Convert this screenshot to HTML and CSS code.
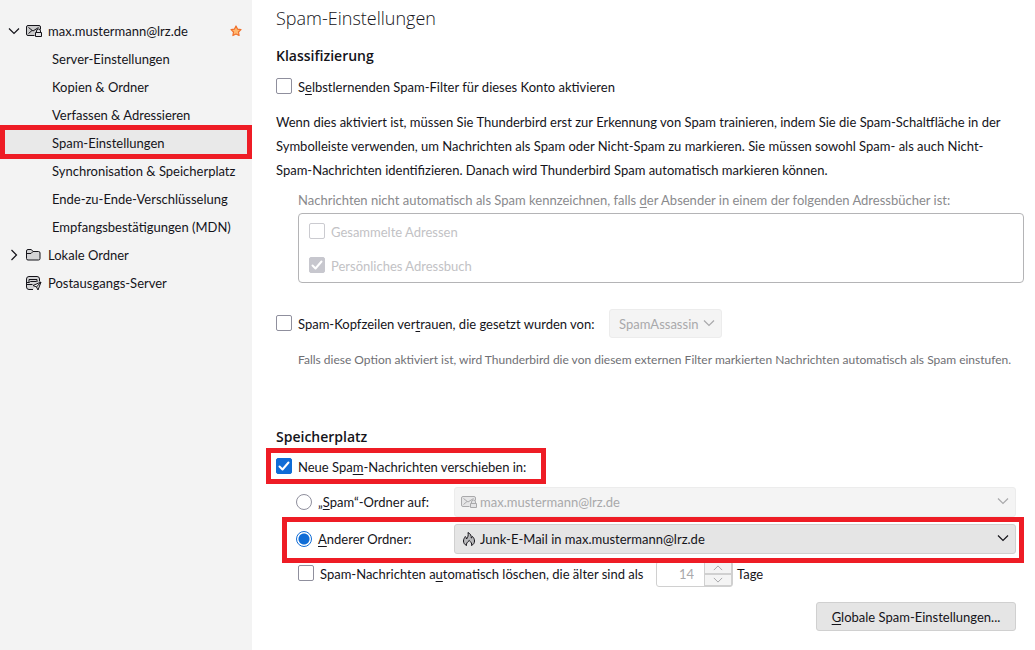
FILE: index.html
```html
<!DOCTYPE html>
<html lang="de">
<head>
<meta charset="utf-8">
<title>Spam-Einstellungen</title>
<link rel="stylesheet" href="styles.css">
</head>
<body>
<svg class="defs" aria-hidden="true">
  <symbol id="mail-lock" viewBox="0 0 16 16">
    <path d="M8.500 12.500h-6.500a1.500 1.500 0 0 1-1.500-1.500v-7a1.500 1.500 0 0 1 1.500-1.500h11a1.500 1.500 0 0 1 1.500 1.500v2.500" fill="currentColor" fill-opacity=".18" stroke="currentColor"/>
    <path d="M2.500 4.500l4.500 3.500 5.500-3.500M2.500 10.500l3.500-3" fill="none" stroke="currentColor"/>
    <path d="M9.500 9.500h6v4h-6zM10.500 9.500v-1.500a2 2 0 0 1 4 0v1.500" fill="#e4e4e6" stroke="currentColor"/>
  </symbol>
  <symbol id="chevron" viewBox="0 0 12 12">
    <path d="M1 3.500l5 5 5-5" fill="none" stroke="currentColor" stroke-width="1.200"/>
  </symbol>
</svg>
<div class="app">
  <nav class="sidebar" aria-label="Konten">
    <ul class="tree">
      <li class="account">
        <svg class="twisty"><use href="#chevron"/></svg>
        <svg class="icon"><use href="#mail-lock"/></svg>
        <a href="#konto">max.mustermann@lrz.de</a>
        <svg class="star" viewBox="0 0 12 12"><path d="M6 1l1.500 3.100 3.500.500-2.500 2.400.600 3.500L6 9l-3.100 1.500.600-3.500L1 4.600l3.500-.500z" fill="#ffb870" stroke="#f0702c" stroke-width="1.200" stroke-linejoin="round"/></svg>
      </li>
      <li class="page"><a href="#server">Server-Einstellungen</a></li>
      <li class="page"><a href="#kopien">Kopien &amp; Ordner</a></li>
      <li class="page"><a href="#verfassen">Verfassen &amp; Adressieren</a></li>
      <li class="page current"><a href="#spam" aria-current="page">Spam-Einstellungen</a></li>
      <li class="page"><a href="#sync">Synchronisation &amp; Speicherplatz</a></li>
      <li class="page"><a href="#e2e">Ende-zu-Ende-Verschlüsselung</a></li>
      <li class="page"><a href="#mdn">Empfangsbestätigungen (MDN)</a></li>
      <li class="account">
        <svg class="twisty closed"><use href="#chevron"/></svg>
        <svg class="icon" viewBox="0 0 16 16"><path d="M.500 11.500V4A1.500 1.500 0 0 1 2 2.500h3.300L7 4.500h5.500A1.500 1.500 0 0 1 14 6v5.500a1.500 1.500 0 0 1-1.500 1.500H2A1.500 1.500 0 0 1 .500 11.500z" fill="#d4d4d6" stroke="currentColor"/><path d="M.500 6.500h4.500l2-2" fill="none" stroke="currentColor"/></svg>
        <a href="#lokal">Lokale Ordner</a>
      </li>
      <li class="account">
        <span class="twisty"></span>
        <svg class="icon" viewBox="0 0 16 16"><path d="M7 14.500H3a2.500 2.500 0 0 1-2.500-2.500V4A2.500 2.500 0 0 1 3 1.500h8A2.500 2.500 0 0 1 13.500 4v2.500" fill="#d4d4d6" stroke="currentColor"/><path d="M.500 9.500h6M3 7V4.500h8V7M.500 7.500h3l1-1h6" fill="none" stroke="currentColor"/><path d="M15 7l-8 3.500 3.500 1.500 1.500 3zM15 7l-4.500 5" fill="#eee" stroke="currentColor" stroke-linejoin="round"/></svg>
        <a href="#smtp">Postausgangs-Server</a>
      </li>
    </ul>
  </nav>
  <main class="content">
    <h1>Spam-Einstellungen</h1>
    <section class="classify">
      <h2>Klassifizierung</h2>
      <label class="check"><input type="checkbox"><span>S<u>e</u>lbstlernenden Spam-Filter für dieses Konto aktivieren</span></label>
      <p class="description">Wenn dies aktiviert ist, müssen Sie Thunderbird erst zur Erkennung von Spam trainieren, indem Sie die Spam-Schaltfläche in der Symbolleiste verwenden, um Nachrichten als Spam oder Nicht-Spam zu markieren. Sie müssen sowohl Spam- als auch Nicht-Spam-Nachrichten identifizieren. Danach wird Thunderbird Spam automatisch markieren können.</p>
      <fieldset class="books" disabled>
        <legend>Nachrichten nicht automatisch als Spam kennzeichnen, falls <u>d</u>er Absender in einem der folgenden Adressbücher ist:</legend>
        <div class="book-list">
          <label class="check"><input type="checkbox"><span>Gesammelte Adressen</span></label>
          <label class="check"><input type="checkbox" checked><span>Persönliches Adressbuch</span></label>
        </div>
      </fieldset>
      <div class="trust">
        <label class="check"><input type="checkbox"><span>Spam-Kopfzeilen ver<u>t</u>rauen, die gesetzt wurden von:</span></label>
        <span class="picker disabled compact">
          <select aria-label="Externer Filter" disabled><option>SpamAssassin</option></select>
          <svg class="arrow"><use href="#chevron"/></svg>
        </span>
      </div>
      <p class="note">Falls diese Option aktiviert ist, wird Thunderbird die von diesem externen Filter markierten Nachrichten automatisch als Spam einstufen.</p>
    </section>
    <section class="storage">
      <h2>Speicherplatz</h2>
      <label class="check move"><input type="checkbox" checked><span>Neue Spa<u>m</u>-Nachrichten verschieben in:</span></label>
      <div class="target">
        <label class="check"><input type="radio" name="target"><span>„<u>S</u>pam“-Ordner auf:</span></label>
        <span class="picker disabled with-icon">
          <svg class="lead"><use href="#mail-lock"/></svg>
          <select aria-label="Konto für Spam-Ordner" disabled><option>max.mustermann@lrz.de</option></select>
          <svg class="arrow"><use href="#chevron"/></svg>
        </span>
      </div>
      <div class="target marked">
        <label class="check"><input type="radio" name="target" checked><span><u>A</u>nderer Ordner:</span></label>
        <span class="picker with-icon">
          <svg class="lead" viewBox="0 0 16 16"><path d="M5.500 14.500C3.500 13.500 2.500 12 2.500 10c0-2 1-3 1.800-4.500.9.700 1.200 1.500 1.200 2.500C7 6.500 7.500 4 7 1.500c2.500 1.200 3.500 3.300 3.300 5.500.7-.3 1-.8 1.200-1.500 1.300 1.300 2 2.800 2 4.500 0 2-1 3.500-3 4.500.7-2-.5-3.500-2.300-5-1.700 1.500-3.200 3-2.700 5z" fill="#b8b8ba" stroke="currentColor" stroke-linejoin="round"/></svg>
          <select aria-label="Ordner"><option>Junk-E-Mail in max.mustermann@lrz.de</option></select>
          <svg class="arrow"><use href="#chevron"/></svg>
        </span>
      </div>
      <div class="purge">
        <label class="check"><input type="checkbox"><span>Spam-Nachrichten a<u>u</u>tomatisch löschen, die älter sind als</span></label>
        <span class="spinner">
          <input type="number" value="14" aria-label="Tage" disabled>
          <span class="steps">
            <button type="button" aria-label="Mehr" disabled><svg class="up"><use href="#chevron"/></svg></button>
            <button type="button" aria-label="Weniger" disabled><svg><use href="#chevron"/></svg></button>
          </span>
        </span>
        <span>Tage</span>
      </div>
      <div class="actions"><button type="button" class="global"><u>G</u>lobale Spam-Einstellungen...</button></div>
    </section>
  </main>
</div>
</body>
</html>
```
FILE: styles.css
```css
* { box-sizing: border-box; }
body {
  margin: 0;
  background: #fff;
  color: #15141a;
  font: 13px/20px Lato, "Open Sans", sans-serif;
}
.defs { position: absolute; width: 0; height: 0; }
u { text-underline-offset: 2px; text-decoration-thickness: 1px; }
.app { display: flex; min-height: 100vh; }

.sidebar { flex: 0 0 252px; background: #f3f3f3; padding-top: 17px; }
.tree { list-style: none; margin: 0; padding: 0; }
.tree li { display: flex; align-items: center; height: 28px; white-space: nowrap; }
.tree a { color: inherit; text-decoration: none; }
.account { padding: 0 10px 0 8px; }
.page { padding-left: 52px; }
.twisty { width: 12px; height: 12px; margin-right: 6px; }
.closed { transform: rotate(-90deg); }
.icon { width: 16px; height: 16px; margin-right: 6px; }
.star { width: 12px; height: 12px; margin-left: auto; }
.current { position: relative; background: #e9e9e9; }
.current::after {
  content: "";
  position: absolute;
  inset: -4px 0 -2px;
  border: 5px solid #ee1c25;
}

.content { flex: 1; min-width: 0; padding: 6px 11px 19px 24px; }
h1 { margin: 0 0 16px; font-size: 18px; line-height: 24px; font-weight: 300; font-family: "Open Sans", sans-serif; }
h2 { margin: 0; font-size: 14px; line-height: 20px; font-weight: 600; font-family: "Open Sans", sans-serif; }

.check { display: flex; align-items: center; gap: 6px; white-space: nowrap; }
.check input {
  appearance: none;
  flex: none;
  width: 16px;
  height: 16px;
  margin: 0 0 2px;
  border: 1px solid #8f8f9d;
  border-radius: 2px;
  background: #fff center / 16px no-repeat;
}
.check input[type="checkbox"]:checked {
  border-color: #0f6cd6;
  background-color: #0f6cd6;
  background-image: url("data:image/svg+xml,%3Csvg xmlns='http://www.w3.org/2000/svg' viewBox='0 0 16 16'%3E%3Cpath d='M3.500 8.500l3 3 6-7' fill='none' stroke='white' stroke-width='2' stroke-linecap='round' stroke-linejoin='round'/%3E%3C/svg%3E");
}
.check input[type="radio"] { border-radius: 50%; margin: 0; }
.check input[type="radio"]:checked {
  border-color: #0f6cd6;
  background: radial-gradient(circle, #0f6cd6 5px, #fff 6px);
}
.classify > .check { margin-top: 11px; }
.description { margin: 13px 0 8px; padding-right: 12px; line-height: 24px; }

.books { border: 0; margin: 0; padding: 0 0 0 22px; min-width: 0; }
.books legend { padding: 0; color: #8a8a8d; margin-bottom: 3px; }
.book-list {
  display: grid;
  gap: 14px;
  padding: 8px 10px 6px;
  border: 1px solid #b4b4b6;
  border-radius: 4px;
  color: #c2c2c5;
}
.book-list input { border-color: #cbcbd0; }
.book-list .check input:checked { background-color: #c7c7ce; border-color: #c7c7ce; }

.trust { display: flex; align-items: center; gap: 8px; margin-top: 26px; }
.trust > .check { flex: 0 0 325px; }
.note { margin: 12px 0 0 22px; font-size: 12px; line-height: 20px; color: #6f6f74; }

.picker { position: relative; display: flex; flex: 1; }
.picker select {
  appearance: none;
  width: 100%;
  height: 30px;
  margin: 0;
  padding: 0 24px 0 9px;
  border: 1px solid #d0d0d0;
  border-radius: 3px;
  background: #e5e5e5;
  color: inherit;
  font: inherit;
  opacity: 1;
}
.picker.disabled { color: #a9a9ab; }
.picker.disabled select { background: #f4f4f4; border-color: #ececec; }
.picker.compact { flex: none; }
.picker.compact select { height: 29px; padding-right: 22px; }
.picker.with-icon select { padding-left: 25px; }
.lead { position: absolute; left: 7px; top: 7px; width: 16px; height: 16px; }
.arrow { position: absolute; right: 7px; top: 8px; width: 12px; height: 12px; pointer-events: none; }

.storage { margin-top: 57px; }
.move { position: relative; width: fit-content; margin: 10px 0; }
.move::after {
  content: "";
  position: absolute;
  inset: -9px -20px -7px -10px;
  border: 5px solid #ee1c25;
}
.target { position: relative; display: flex; align-items: center; margin: 0 8px 7px 20px; }
.target > .check { flex: 0 0 158px; }
.marked::after {
  content: "";
  position: absolute;
  inset: -7px -8px -9px -14px;
  border: 5px solid #ee1c25;
  pointer-events: none;
}
.purge { display: flex; align-items: center; gap: 4px; padding-left: 22px; }
.purge > .check { flex: 0 0 354px; }
.spinner {
  display: flex;
  height: 26px;
  width: 77px;
  border: 1px solid #d0d0d0;
  border-radius: 3px;
}
.spinner input {
  appearance: textfield;
  flex: 1;
  min-width: 0;
  border: 0;
  padding: 0 10px 0 0;
  background: none;
  color: #a9a9ab;
  font: inherit;
  text-align: right;
}
.spinner input::-webkit-inner-spin-button { display: none; }
.steps { display: grid; width: 28px; grid-template-rows: 1fr 1fr; }
.steps button {
  display: flex;
  align-items: center;
  justify-content: center;
  min-height: 0;
  padding: 0;
  border: 1px solid #d0d0d0;
  background: #f4f4f4;
  color: #a9a9ab;
}
.steps svg { width: 12px; height: 10px; }
.up { transform: rotate(180deg); }
.actions { display: flex; justify-content: flex-end; margin: 15px 8px 0 0; }
.global {
  min-width: 200px;
  height: 29px;
  padding: 0 12px;
  border: 1px solid #d0d0d0;
  border-radius: 3px;
  background: #e5e5e5;
  color: inherit;
  font: inherit;
}
```
